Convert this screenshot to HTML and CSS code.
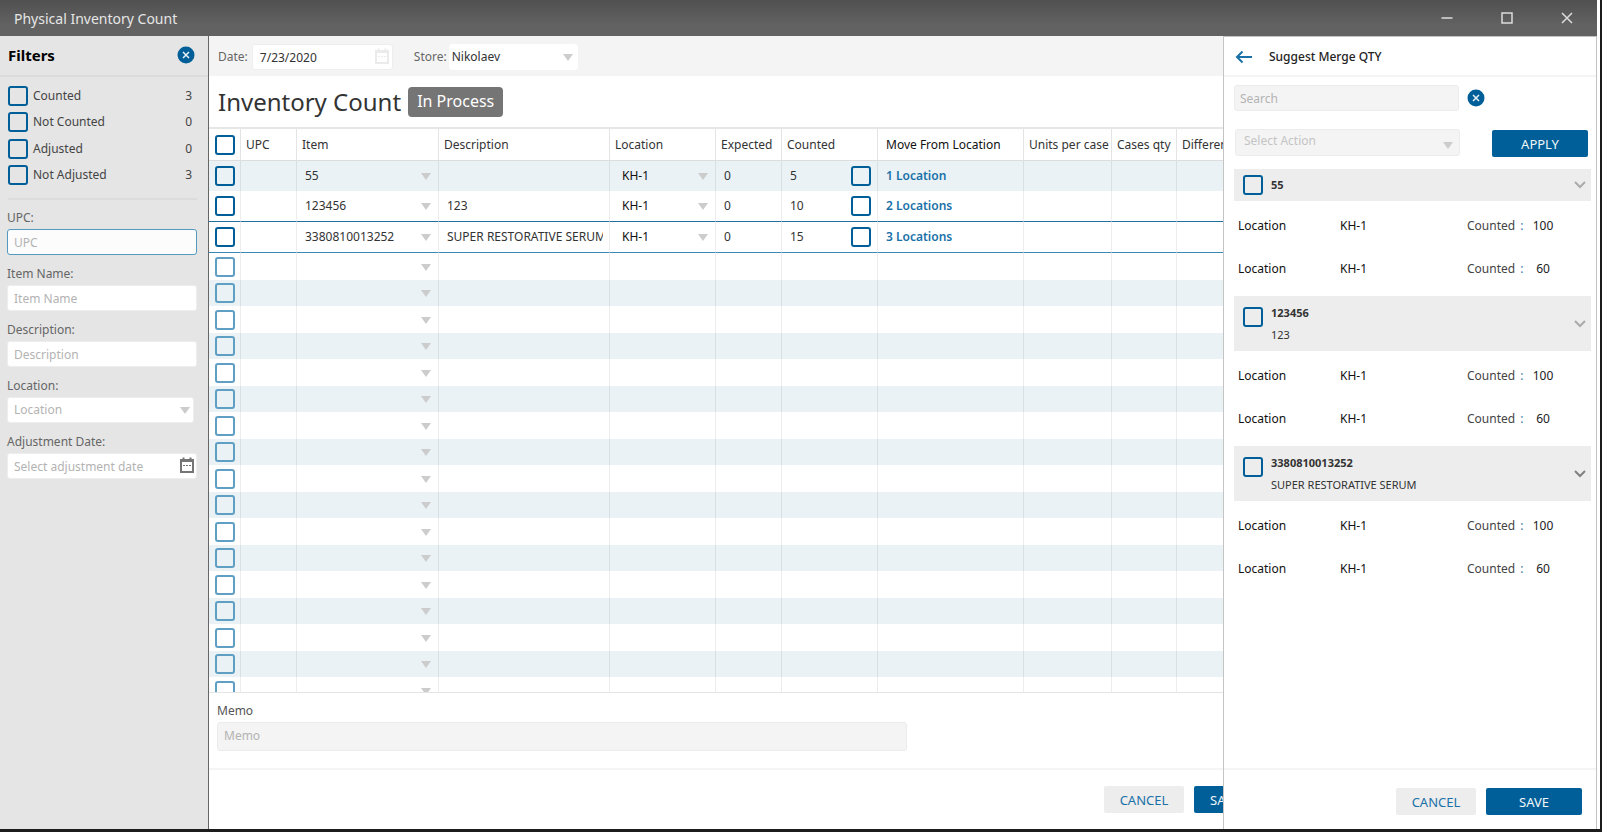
FILE: index.html
```html
<!DOCTYPE html>
<html lang="en">
<head>
<meta charset="utf-8">
<title>Physical Inventory Count</title>
<link rel="stylesheet" href="styles.css">
</head>
<body>
<div class="window">
  <header class="titlebar">
    <h1 class="titlebar-name">Physical Inventory Count</h1>
    <div class="window-controls">
      <button class="window-button" aria-label="Minimize"><svg width="12" height="12" viewBox="0 0 12 12"><path d="M0.500 6H11.500"/></svg></button>
      <button class="window-button" aria-label="Maximize"><svg width="12" height="12" viewBox="0 0 12 12"><path d="M1 1H11V11H1Z"/></svg></button>
      <button class="window-button" aria-label="Close"><svg width="12" height="12" viewBox="0 0 12 12"><path d="M1 1L11 11M11 1L1 11"/></svg></button>
    </div>
  </header>

  <div class="workspace">
    <aside class="filters">
      <div class="filters-head">
        <h2 class="filters-title">Filters</h2>
        <button class="clear" aria-label="Clear filters"><svg width="18" height="18" viewBox="0 0 18 18"><circle cx="9" cy="9" r="8.500"/><path d="M6 6L12 12M12 6L6 12"/></svg></button>
      </div>
      <div class="filter-checks">
        <div class="filter-check"><input type="checkbox" class="check" id="f1"><label for="f1">Counted</label><span>3</span></div>
        <div class="filter-check"><input type="checkbox" class="check" id="f2"><label for="f2">Not Counted</label><span>0</span></div>
        <div class="filter-check"><input type="checkbox" class="check" id="f3"><label for="f3">Adjusted</label><span>0</span></div>
        <div class="filter-check"><input type="checkbox" class="check" id="f4"><label for="f4">Not Adjusted</label><span>3</span></div>
      </div>
      <div class="filter-fields">
        <label class="field-label" for="upc">UPC:</label>
        <input class="field field-active" id="upc" type="text" placeholder="UPC">
        <label class="field-label" for="item-name">Item Name:</label>
        <input class="field" id="item-name" type="text" placeholder="Item Name">
        <label class="field-label" for="desc">Description:</label>
        <input class="field" id="desc" type="text" placeholder="Description">
        <label class="field-label" for="loc">Location:</label>
        <div class="pick pick-filter"><select class="field muted" id="loc"><option>Location</option></select></div>
        <label class="field-label" for="adj">Adjustment Date:</label>
        <div class="date-field">
          <input class="field" id="adj" type="text" placeholder="Select adjustment date">
          <svg class="calendar" width="16" height="17" viewBox="0 0 16 17"><path d="M2 3H14V15H2ZM2 4H14M4.500 0.500V3M11.500 0.500V3"/><path class="calendar-dots" d="M4 8.500H6M7 8.500H9M10 8.500H12"/></svg>
        </div>
      </div>
    </aside>

    <main class="main">
      <div class="toolbar">
        <label class="toolbar-label" for="date">Date:</label>
        <div class="date-field toolbar-date">
          <input class="field" id="date" type="text" value="7/23/2020">
          <svg class="calendar calendar-light" width="16" height="17" viewBox="0 0 16 17"><path d="M2 3H14V15H2ZM2 4H14M4.500 0.500V3M11.500 0.500V3"/><path class="calendar-dots" d="M4 8.500H6M7 8.500H9M10 8.500H12"/></svg>
        </div>
        <label class="toolbar-label" for="store">Store:</label>
        <div class="pick pick-store"><select class="field" id="store"><option>Nikolaev</option></select></div>
      </div>
      <div class="heading">
        <h2 class="heading-title">Inventory Count</h2>
        <span class="status">In Process</span>
      </div>
      <div class="grid-wrap">
        <table class="grid">
          <colgroup>
            <col class="w-check"><col class="w-upc"><col class="w-item"><col class="w-desc"><col class="w-loc"><col class="w-exp"><col class="w-count"><col class="w-move"><col class="w-units"><col class="w-cases"><col>
          </colgroup>
          <thead>
            <tr><th><input type="checkbox" class="check" aria-label="Select all"></th><th>UPC</th><th>Item</th><th>Description</th><th>Location</th><th>Expected</th><th>Counted</th><th class="move">Move From Location</th><th>Units per case</th><th>Cases qty</th><th>Difference</th></tr>
          </thead>
          <tbody id="rows">
            <tr class="filled shaded">
              <td><input type="checkbox" class="check" aria-label="Select 55"></td><td></td>
              <td><div class="pick"><select aria-label="Item"><option>55</option></select></div></td>
              <td></td>
              <td><div class="pick"><select class="dark" aria-label="Location"><option>KH-1</option></select></div></td>
              <td>0</td>
              <td><div class="count"><span>5</span><input type="checkbox" class="check" aria-label="Counted 55"></div></td>
              <td class="move"><a href="#l1">1 Location</a></td><td></td><td></td><td></td>
            </tr>
            <tr class="filled">
              <td><input type="checkbox" class="check" aria-label="Select 123456"></td><td></td>
              <td><div class="pick"><select aria-label="Item"><option>123456</option></select></div></td>
              <td><div class="clip">123</div></td>
              <td><div class="pick"><select class="dark" aria-label="Location"><option>KH-1</option></select></div></td>
              <td>0</td>
              <td><div class="count"><span>10</span><input type="checkbox" class="check" aria-label="Counted 123456"></div></td>
              <td class="move"><a href="#l2">2 Locations</a></td><td></td><td></td><td></td>
            </tr>
            <tr class="filled current">
              <td><input type="checkbox" class="check" aria-label="Select 3380810013252"></td><td></td>
              <td><div class="pick"><select aria-label="Item"><option>3380810013252</option></select></div></td>
              <td><div class="clip">SUPER RESTORATIVE SERUM</div></td>
              <td><div class="pick"><select class="dark" aria-label="Location"><option>KH-1</option></select></div></td>
              <td>0</td>
              <td><div class="count"><span>15</span><input type="checkbox" class="check" aria-label="Counted 3380810013252"></div></td>
              <td class="move"><a href="#l3">3 Locations</a></td><td></td><td></td><td></td>
            </tr>
          </tbody>
        </table>
      </div>
      <div class="memo">
        <label class="memo-label" for="memo">Memo</label>
        <input class="memo-input" id="memo" type="text" placeholder="Memo">
      </div>
      <footer class="main-footer">
        <button class="button button-plain">CANCEL</button>
        <button class="button button-primary button-start">SAVE</button>
      </footer>
    </main>

    <section class="panel">
      <div class="panel-head">
        <button class="back" aria-label="Back"><svg width="18" height="14" viewBox="0 0 18 14"><path d="M17 7H2M7.500 1.500L2 7L7.500 12.500"/></svg></button>
        <h2 class="panel-title">Suggest Merge QTY</h2>
      </div>
      <div class="panel-body">
        <div class="search-row">
          <input class="panel-field" type="text" placeholder="Search" aria-label="Search">
          <button class="clear" aria-label="Clear search"><svg width="18" height="18" viewBox="0 0 18 18"><circle cx="9" cy="9" r="8.500"/><path d="M6 6L12 12M12 6L6 12"/></svg></button>
        </div>
        <div class="action-row">
          <div class="pick pick-action"><select class="panel-field" aria-label="Action"><option>Select Action</option></select></div>
          <button class="button button-primary">APPLY</button>
        </div>
        <article class="group">
          <div class="group-head">
            <input type="checkbox" class="check" id="g1"><label for="g1"><b>55</b></label>
            <button class="toggle" aria-label="Toggle 55"><svg width="12" height="8" viewBox="0 0 12 8"><path d="M1 1L6 6L11 1"/></svg></button>
          </div>
          <div class="places">
            <div class="place"><span>Location</span><span>KH-1</span><span class="place-counted">Counted <i>:</i></span><span class="place-qty">100</span></div>
            <div class="place"><span>Location</span><span>KH-1</span><span class="place-counted">Counted <i>:</i></span><span class="place-qty">60</span></div>
          </div>
        </article>
        <article class="group">
          <div class="group-head group-tall">
            <input type="checkbox" class="check" id="g2"><label for="g2"><b>123456</b>123</label>
            <button class="toggle" aria-label="Toggle 123456"><svg width="12" height="8" viewBox="0 0 12 8"><path d="M1 1L6 6L11 1"/></svg></button>
          </div>
          <div class="places">
            <div class="place"><span>Location</span><span>KH-1</span><span class="place-counted">Counted <i>:</i></span><span class="place-qty">100</span></div>
            <div class="place"><span>Location</span><span>KH-1</span><span class="place-counted">Counted <i>:</i></span><span class="place-qty">60</span></div>
          </div>
        </article>
        <article class="group">
          <div class="group-head group-tall">
            <input type="checkbox" class="check" id="g3"><label for="g3"><b>3380810013252</b>SUPER RESTORATIVE SERUM</label>
            <button class="toggle toggle-dark" aria-label="Toggle 3380810013252"><svg width="12" height="8" viewBox="0 0 12 8"><path d="M1 1L6 6L11 1"/></svg></button>
          </div>
          <div class="places">
            <div class="place"><span>Location</span><span>KH-1</span><span class="place-counted">Counted <i>:</i></span><span class="place-qty">100</span></div>
            <div class="place"><span>Location</span><span>KH-1</span><span class="place-counted">Counted <i>:</i></span><span class="place-qty">60</span></div>
          </div>
        </article>
      </div>
      <footer class="panel-footer">
        <button class="button button-plain">CANCEL</button>
        <button class="button button-primary">SAVE</button>
      </footer>
    </section>
  </div>
</div>
<script src="rows.js"></script>
</body>
</html>
```

FILE: styles.css
```css
* { box-sizing: border-box; }
body {
  margin: 0;
  background: #1c1c1c;
  color: #333;
  font: 12px/18px "Noto Sans", "Open Sans", sans-serif;
}
button, input, select { font: inherit; color: inherit; margin: 0; }
button { padding: 0; border: 0; background: none; display: flex; align-items: center; justify-content: center; }
h1, h2 { margin: 0; font-weight: 400; }
svg { display: block; fill: none; flex: none; }
a { color: #1a71a8; text-decoration: none; font-weight: 600; }
::placeholder { color: #b3b3b3; opacity: 1; }

.window {
  height: calc(100vh - 3px);
  margin-right: 2px;
  padding-right: 3px;
  background: #fff;
  display: flex;
  flex-direction: column;
}
.titlebar {
  flex: none;
  height: 36px;
  padding: 2px 0 0 14px;
  background: linear-gradient(#505050, #626262 70%);
  color: #e6e6e6;
  display: flex;
  align-items: center;
  justify-content: space-between;
}
.titlebar-name { font-size: 14px; }
.window-controls { display: flex; }
.window-button { width: 60px; height: 34px; padding-bottom: 2px; }
.window-button svg { stroke: #dcdcdc; stroke-width: 1.500; }

.workspace { flex: 1; min-height: 0; display: flex; }

.filters {
  width: 209px;
  flex: none;
  background: #e5e5e5;
  border-right: 1px solid #666;
  display: flex;
  flex-direction: column;
}
.filters-head {
  height: 41px;
  padding: 0 13px 1px 8px;
  border-bottom: 2px solid #dcdcdc;
  display: flex;
  align-items: center;
  justify-content: space-between;
}
.filters-title { font-size: 15px; font-weight: 700; color: #000; }
.clear circle { fill: #005f98; }
.clear path { stroke: #e8f1f6; stroke-width: 1.500; }

.check {
  appearance: none;
  display: block;
  flex: none;
  width: 20px;
  height: 20px;
  border: 2px solid #005f98;
  border-radius: 3px;
}
.filter-checks {
  margin: 0 11px 0 8px;
  padding: 5px 5px 10px 0;
  border-bottom: 2px solid #dcdcdc;
}
.filter-check { display: flex; align-items: center; height: 27px; gap: 5px; color: #444; }
.filter-check:nth-child(even) { height: 26px; }
.filter-check label { flex: 1; }
.filter-fields { padding: 9px 11px 0 7px; display: flex; flex-direction: column; }
.field-label { height: 20px; color: #666; }
.field {
  width: 100%;
  height: 26px;
  padding: 0 6px;
  border: 1px solid #eee;
  border-radius: 3px;
  background: #fff;
}
.filter-fields > .field, .filter-fields > .pick, .filter-fields > .date-field { margin-bottom: 10px; }
.field-active { border-color: #5499c0; background: #fcfcfc; }
.muted { color: #b3b3b3; }

.pick { position: relative; }
.pick::after {
  content: "";
  position: absolute;
  right: 12px;
  top: calc(50% - 3px);
  border: 5px solid transparent;
  border-top: 7px solid #ccc;
  border-bottom: 0;
  pointer-events: none;
}
.pick select { appearance: none; outline: 0; }
.pick-filter { margin-right: 3px; }
.pick-filter::after { right: 4px; }
.date-field { position: relative; }
.calendar { position: absolute; right: 2px; top: 4px; stroke: #757575; stroke-width: 2; }
.calendar-dots { stroke-width: 1; }
.calendar-light { right: 3px; stroke: #ebebeb; }

.main { flex: 1; min-width: 0; overflow: hidden; display: flex; flex-direction: column; }
.toolbar { flex: none; height: 40px; padding: 2px 0 0 9px; background: #f4f4f4; display: flex; align-items: center; }
.toolbar-label { color: #666; }
.toolbar-date { width: 141px; margin: 0 21px 0 4px; }
.toolbar-date .field { padding-left: 7px; }
.pick-store { width: 129px; margin-left: 2px; }
.pick-store .field { padding-left: 2px; border-color: #fff; }
.pick-store::after { right: 5px; }
.heading { flex: none; height: 51px; display: flex; align-items: center; gap: 7px; padding-left: 9px; }
.heading-title { font-size: 24px; line-height: 34px; }
.status { height: 30px; padding: 0 9px; border-radius: 4px; background: #757575; color: #fff; font-size: 16px; line-height: 29px; }

.grid-wrap { flex: 1; min-height: 0; overflow: hidden; border-top: 2px solid #e6e6e6; border-bottom: 1px solid #e4e4e4; }
.grid { width: 100%; table-layout: fixed; border-collapse: separate; border-spacing: 0; }
.w-check { width: 32px; }
.w-upc { width: 56px; }
.w-item { width: 142px; }
.w-desc { width: 171px; }
.w-loc { width: 106px; }
.w-exp { width: 66px; }
.w-count { width: 96px; }
.w-move { width: 146px; }
.w-units { width: 88px; }
.w-cases { width: 65px; }
.grid th { height: 32px; padding: 0 0 0 5px; font-weight: 400; text-align: left; white-space: nowrap; border-right: 1px solid #e4e4e4; border-bottom: 1px solid #ddd; }
.grid td { height: 26px; padding: 0 0 0 8px; border-right: 1px solid rgba(0, 0, 0, 0.07); }
.grid th:first-child, .grid td:first-child { padding-left: 6px; }
.grid th:last-child, .grid td:last-child { border-right: 0; }
.grid .move { padding-left: 8px; color: #111; }
.grid tr:nth-child(even) td { height: 27px; }
.grid tr.filled td { height: 30px; }
.grid tr.current td { height: 32px; border-top: 1px solid #1f6f9f; border-bottom: 1px solid #3a8ab8; }
.shaded { background: #eaf2f6; }
.blank .check { border-color: #5f9fc4; }
.grid select { width: 100%; height: 20px; padding: 0; border: 0; background: none; }
.grid select.dark { padding-left: 4px; color: #111; }
.grid .pick::after { right: 7px; }
.clip { margin-right: 6px; overflow: hidden; white-space: nowrap; }
.count { display: flex; justify-content: space-between; align-items: center; padding-right: 6px; }

.memo { flex: none; height: 75px; padding: 9px 0 0 8px; display: flex; flex-direction: column; gap: 2px; }
.memo-label { color: #555; }
.memo-input { width: 690px; max-width: 100%; height: 29px; padding: 0 6px 2px; border: 1px solid #ececec; border-radius: 3px; background: #f4f4f4; }
.main-footer { flex: none; height: 61px; margin-right: -67px; padding-top: 16px; border-top: 2px solid #f4f4f4; display: flex; justify-content: flex-end; gap: 10px; }

.button { height: 27px; border-radius: 2px; font-size: 13px; }
.button-plain { width: 80px; background: #ededed; color: #1a71a8; }
.button-primary { width: 96px; background: #005f98; color: #f0f6fa; }
.button-start { justify-content: flex-start; padding-left: 16px; }

.panel {
  width: 374px;
  flex: none;
  border: 1px solid #c4c4c4;
  border-bottom: 0;
  background: #fff;
  display: flex;
  flex-direction: column;
}
.panel-head { height: 40px; padding: 2px 0 0 11px; border-bottom: 2px solid #f4f4f4; display: flex; align-items: center; gap: 16px; }
.back svg { stroke: #1a71a8; stroke-width: 2; }
.panel-title { font-size: 12px; font-weight: 500; color: #222; }
.panel-body { flex: 1; padding: 8px 5px 0 10px; }
.search-row { display: flex; align-items: center; gap: 8px; }
.panel-field { width: 225px; height: 26px; padding: 0 5px; border: 1px solid #ececec; border-radius: 3px; background: #f4f4f4; }
.action-row { display: flex; justify-content: space-between; padding: 18px 3px 12px 1px; }
.pick-action select { height: 27px; padding: 0 8px 3px; color: #c4c4c4; }
.pick-action::after { right: 7px; top: calc(50% - 1px); }
.action-row .button { margin-top: 1px; }
.group-head { min-height: 32px; padding: 0 5px 0 9px; background: #ededed; display: flex; align-items: center; gap: 8px; }
.group-head label { flex: 1; font-size: 11px; line-height: 22px; }
.group-head b { display: block; font-weight: 700; }
.group-tall { min-height: 55px; }
.group-tall .check { align-self: flex-start; margin-top: 11px; }
.toggle svg { stroke: #aaa; stroke-width: 2; }
.toggle-dark svg { stroke: #808080; }
.places { padding: 3px 0 6px; }
.place { height: 43px; padding-left: 4px; display: grid; grid-template-columns: 102px 127px 62px 28px; align-items: center; color: #111; }
.place-counted { color: #444; white-space: nowrap; }
.place-counted i { margin-left: 2px; font-style: normal; color: #3b78a8; }
.place-qty { text-align: center; color: #222; }
.panel-footer { flex: none; height: 61px; padding: 18px 14px 0 0; border-top: 2px solid #f4f4f4; display: flex; justify-content: flex-end; gap: 10px; }
```

FILE: rows.js
```js
const body = document.getElementById("rows");
for (let i = 0; i < 17; i++) {
  const row = document.createElement("tr");
  row.className = i % 2 ? "blank shaded" : "blank";
  row.innerHTML =
    '<td><input type="checkbox" class="check" aria-label="Select row"></td><td></td>' +
    '<td><div class="pick"><select aria-label="Item"><option></option></select></div></td>' +
    "<td></td>".repeat(8);
  body.append(row);
}
```
